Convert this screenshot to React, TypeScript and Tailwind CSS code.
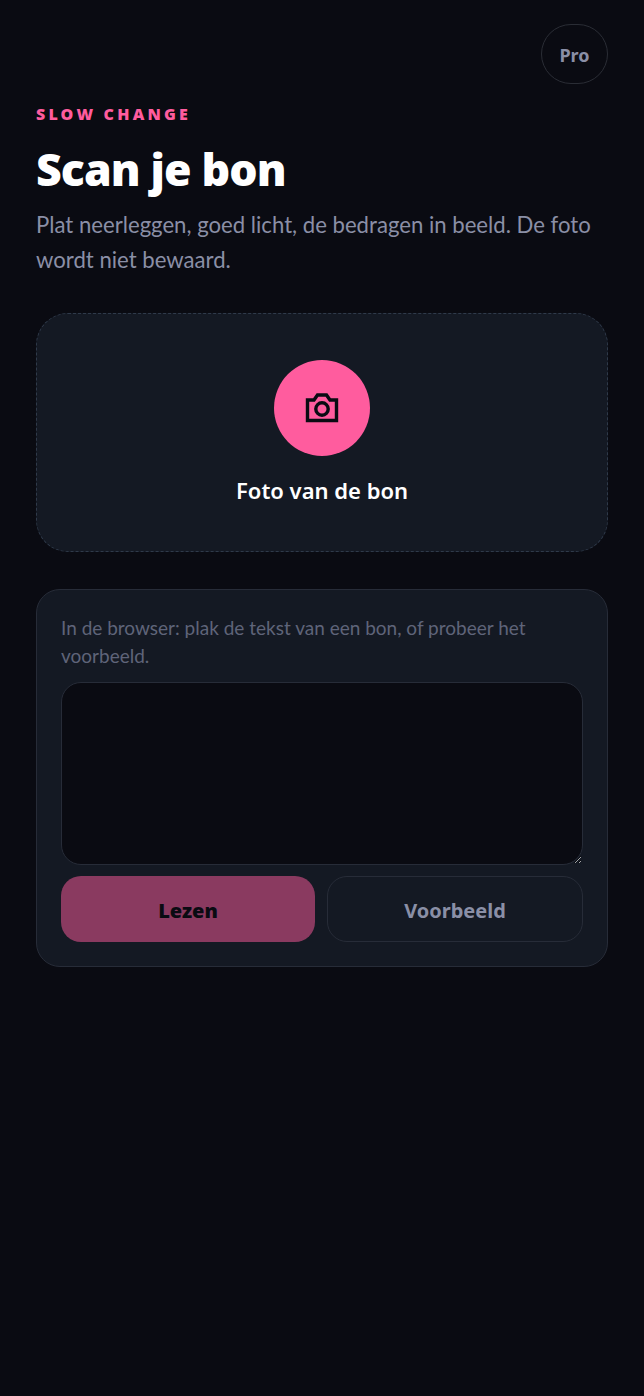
const heading = { fontFamily: '"Noto Sans", sans-serif' };
const body = { fontFamily: 'Lato, "Noto Sans", sans-serif' };

function CameraIcon() {
  return (
    <svg width="36" height="34" viewBox="0 0 36 34" fill="none" stroke="#0a0b12" strokeWidth="3.4" strokeLinejoin="miter">
      <path d="M3.5 9H10L13.5 4H22.5L26 9H32.5V29.5H3.5Z" />
      <circle cx="18" cy="18" r="6.2" />
    </svg>
  );
}

export default function App() {
  return (
    <div style={heading} className="min-h-[1396px] bg-[#0a0b12] px-9 pt-6 text-white">
      <div className="flex justify-end">
        <button className="h-[60px] w-[67px] rounded-full border border-[#2a2d35] pt-0.5 text-[18px] font-bold text-[#8a8fa6]">
          Pro
        </button>
      </div>

      <p className="mt-5 text-[16px] leading-5 font-black tracking-[0.2em] text-[#ff5c9e]">
        SLOW CHANGE
      </p>
      <h1 className="mt-[19px] text-[44.6px] leading-[52px] font-black tracking-[-0.02em]">
        Scan je bon
      </h1>
      <p style={body} className="mt-3 text-[22.15px] leading-[35px] text-[#8a8fa6]">
        Plat neerleggen, goed licht, de bedragen in beeld. De foto wordt niet bewaard.
      </p>

      <button className="mt-9 flex h-[239px] w-full flex-col items-center rounded-[32px] border border-dashed border-[#2f3a4a] bg-[#141923] pt-[46px]">
        <span className="flex h-24 w-24 items-center justify-center rounded-full bg-[#ff5c9e]">
          <CameraIcon />
        </span>
        <span className="mt-[18px] text-[22px] leading-8 font-semibold text-white">
          Foto van de bon
        </span>
      </button>

      <div className="mt-[37px] rounded-[24px] border border-[#272c38] bg-[#141923] p-6">
        <p style={body} className="text-[19px] leading-[28px] text-[#5f6479]">
          In de browser: plak de tekst van een bon, of probeer het voorbeeld.
        </p>
        <textarea className="mt-3 block h-[183px] w-full resize-y rounded-[20px] border border-[#272c38] bg-[#0a0b12] outline-none [color-scheme:dark]" />
        <div className="mt-[11px] flex gap-3">
          <button className="h-[66px] flex-1 rounded-[20px] bg-[#ff5c9e]/50 pt-1 text-[20px] font-black text-[#0a0b12]">
            Lezen
          </button>
          <button className="h-[66px] flex-1 rounded-[20px] border border-[#272c38] bg-[#141923] pt-1 text-[20px] font-bold text-[#8a8fa6]">
            Voorbeeld
          </button>
        </div>
      </div>
    </div>
  );
}
